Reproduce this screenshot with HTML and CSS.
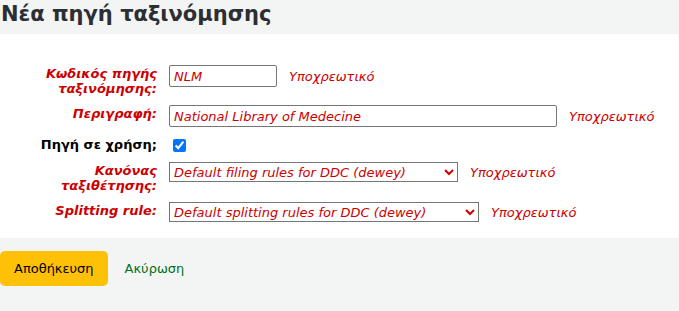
FILE: index.html
```html
<!DOCTYPE html>
<html lang="el">
<head>
<meta charset="utf-8">
<title>Νέα πηγή ταξινόμησης</title>
<link rel="stylesheet" href="styles.css">
</head>
<body>
<h1 class="title">Νέα πηγή ταξινόμησης</h1>
<form class="form">
  <fieldset class="rows">
    <ol class="fields">
      <li class="row">
        <label class="label req" for="class_source">Κωδικός πηγής ταξινόμησης:</label>
        <div class="control">
          <input class="text short" id="class_source" type="text" value="NLM">
          <span class="required">Υποχρεωτικό</span>
        </div>
      </li>
      <li class="row">
        <label class="label req" for="description">Περιγραφή:</label>
        <div class="control">
          <input class="text long" id="description" type="text" value="National Library of Medecine">
          <span class="required">Υποχρεωτικό</span>
        </div>
      </li>
      <li class="row row-check">
        <label class="label" for="used">Πηγή σε χρήση;</label>
        <div class="control">
          <input class="check" id="used" type="checkbox" checked>
        </div>
      </li>
      <li class="row">
        <label class="label req" for="sort_rule">Κανόνας ταξιθέτησης:</label>
        <div class="control">
          <select class="sel sel-filing" id="sort_rule"><option>Default filing rules for DDC (dewey)</option></select>
          <span class="required">Υποχρεωτικό</span>
        </div>
      </li>
      <li class="row last">
        <label class="label req" for="split_rule">Splitting rule:</label>
        <div class="control">
          <select class="sel sel-split" id="split_rule"><option>Default splitting rules for DDC (dewey)</option></select>
          <span class="required">Υποχρεωτικό</span>
        </div>
      </li>
    </ol>
  </fieldset>
  <fieldset class="action">
    <button class="save" type="button">Αποθήκευση</button>
    <a class="cancel" href="#">Ακύρωση</a>
  </fieldset>
</form>
</body>
</html>
```
FILE: styles.css
```css
html, body {
  margin: 0;
  padding: 0;
}
body {
  background: #f3f4f4;
  font-family: "DejaVu Sans", sans-serif;
  font-size: 13px;
  color: #000;
}
.title {
  margin: 0;
  padding: 0 0 5px 1px;
  font-size: 21px;
  line-height: 29px;
  font-weight: bold;
  color: #2b2f33;
}
.form {
  margin: 0;
}
.rows {
  margin: 0;
  border: 0;
  background: #fff;
  padding: 31px 0 16px 0;
}
.fields {
  list-style: none;
  margin: 0;
  padding: 0;
}
.row {
  display: flex;
  align-items: flex-start;
  margin-bottom: 9px;
}
.row.row-check {
  margin-bottom: 7px;
}
.row.last {
  margin-bottom: 0;
}
.label {
  width: 117px;
  margin-left: 40px;
  margin-right: 12px;
  text-align: right;
  font-weight: bold;
  line-height: 15px;
  padding-top: 1px;
}
.label.req {
  color: #cc0000;
  font-style: italic;
}
.control {
  display: flex;
  align-items: center;
}
.text {
  box-sizing: border-box;
  height: 22px;
  padding: 2px 4px;
  border: 1px solid #767676;
  border-radius: 2px;
  font-family: "DejaVu Sans", sans-serif;
  font-size: 13px;
  font-style: italic;
  color: #cc0000;
  margin: 0;
}
.short { width: 108px; }
.long { width: 388px; }
.check {
  margin: 3px 3px 3px 4px;
  width: 13px;
  height: 13px;
}
.sel {
  box-sizing: border-box;
  height: 20px;
  margin: 0;
  font-family: "DejaVu Sans", sans-serif;
  font-size: 13px;
  font-style: italic;
  color: #cc0000;
  border: 1px solid #767676;
  background: #fff;
}
.sel-filing { width: 289px; }
.sel-split { width: 310px; }
.required {
  margin-left: 12px;
  font-style: italic;
  color: #cc0000;
}
.action {
  margin: 0;
  border: 0;
  padding: 13px 0 26px 0;
  display: flex;
  align-items: center;
}
.save {
  font-family: "DejaVu Sans", sans-serif;
  font-size: 13px;
  line-height: 15px;
  color: #000;
  background: #ffc107;
  border: 0;
  border-radius: 5px;
  padding: 10px 14px;
  margin: 0;
}
.cancel {
  margin-left: 17px;
  color: #00701a;
  text-decoration: none;
}
```
